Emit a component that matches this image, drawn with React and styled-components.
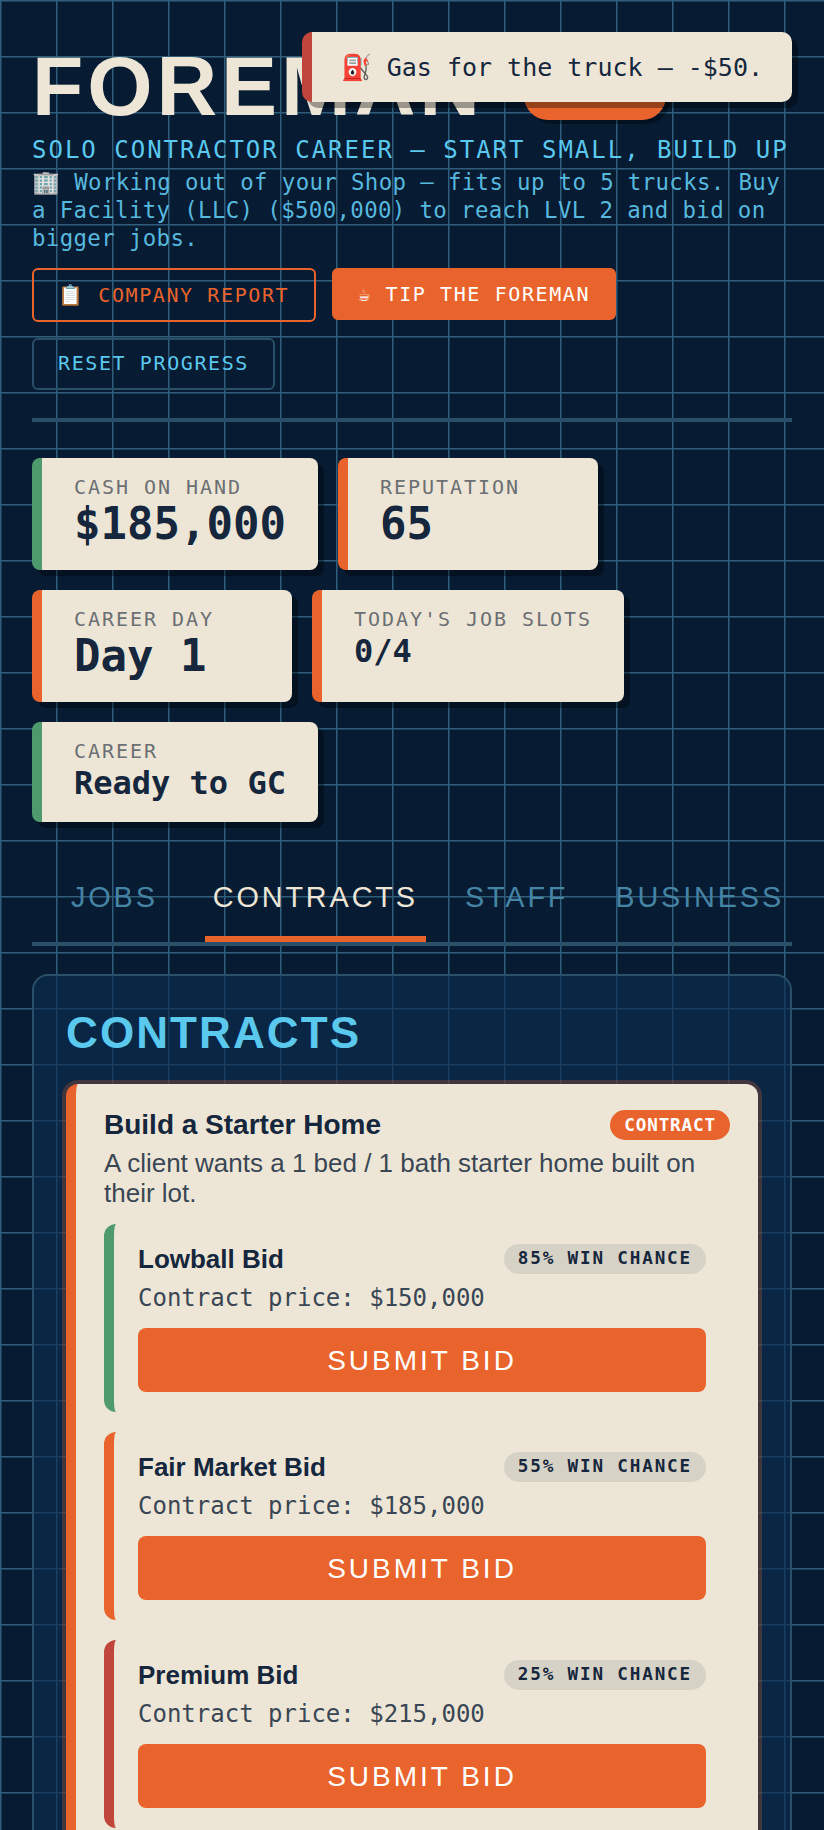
import React from "react";
import styled, { createGlobalStyle } from "styled-components";

const cream = "#ede6d6";
const navy = "#15263d";
const orange = "#e8642c";
const green = "#4f9a6c";
const red = "#c0463c";
const sky = "#5bc8ee";
const steel = "#2a4f68";
const mono = `"DejaVu Sans Mono", monospace`;
const sans = `"Liberation Sans", Arial, sans-serif`;

const GlobalStyle = createGlobalStyle`
  * { box-sizing: border-box; }
  html, body { margin: 0; padding: 0; }
  body {
    background-color: #071b32;
    background-image:
      linear-gradient(#2f5d7a 1px, transparent 2px),
      linear-gradient(90deg, #2f5d7a 1px, transparent 2px);
    background-size: 56px 56px;
    font-family: ${sans};
  }
`;

const Page = styled.div`
  height: 1830px;
  overflow: hidden;
  position: relative;
  padding: 42px 32px 0;
`;

const Toast = styled.div`
  position: absolute;
  top: 32px;
  right: 32px;
  z-index: 10;
  display: flex;
  align-items: center;
  height: 70px;
  padding: 0 29px;
  background: ${cream};
  border-left: 10px solid ${red};
  border-radius: 10px;
  box-shadow: 6px 6px 0 rgba(0, 0, 0, 0.35);
  color: ${navy};
  font-family: ${mono};
  font-size: 25px;
  white-space: pre;
`;

const Header = styled.header`
  display: flex;
  align-items: center;
  gap: 40px;
`;

const Title = styled.h1`
  margin: 0;
  color: ${cream};
  font-size: 84px;
  font-weight: 700;
  letter-spacing: 3.9px;
  line-height: 89px;
`;

const LevelBadge = styled.div`
  width: 142px;
  height: 66px;
  border-radius: 24px;
  background: ${orange};
  box-shadow: 4px 4px 0 rgba(0, 0, 0, 0.35);
`;

const Subtitle = styled.p`
  margin: 4px 0 0;
  color: ${sky};
  font-family: ${mono};
  font-size: 24px;
  letter-spacing: 2px;
  line-height: 30px;
  white-space: nowrap;
`;

const Notice = styled.p`
  margin: 3px 0 0;
  color: #57b8de;
  font-family: ${mono};
  font-size: 22.4px;
  letter-spacing: 0.36px;
  line-height: 28px;
`;

const Actions = styled.div`
  display: flex;
  flex-wrap: wrap;
  align-items: flex-start;
  gap: 16px;
  margin-top: 16px;
`;

const ActionButton = styled.button`
  padding: ${(p) => (p.$tall ? "13px 25px 13px 24px" : p.$raised ? "11px 24px 13px" : "12px 24px")};
  border: 2px solid ${(p) => p.$border};
  border-radius: 6px;
  background: ${(p) => p.$fill || "transparent"};
  color: ${(p) => p.$color};
  font-family: ${mono};
  font-size: 20px;
  letter-spacing: 0.08em;
  line-height: 24px;
`;

const Rule = styled.div`
  height: 4px;
  margin: 28px 0 36px;
  background: ${steel};
`;

const Stats = styled.div`
  display: flex;
  flex-wrap: wrap;
  gap: 20px;
`;

const StatCard = styled.div`
  min-width: 260px;
  padding: 17px 32px 19px;
  background: ${cream};
  border-left: 10px solid ${(p) => p.$accent};
  border-radius: 8px;
  box-shadow: 6px 6px 0 rgba(0, 0, 0, 0.35);
`;

const StatLabel = styled.div`
  color: #6c6f73;
  font-family: ${mono};
  font-size: 20px;
  letter-spacing: 1.96px;
  line-height: 25px;
`;

const StatValue = styled.div`
  margin-bottom: ${(p) => (p.$small ? "0" : "3px")};
  color: ${navy};
  font-family: ${mono};
  font-size: ${(p) => (p.$small ? "32px" : "44px")};
  font-weight: 700;
  line-height: ${(p) => (p.$small ? "39px" : "48px")};
`;

const Tabs = styled.nav`
  display: flex;
  justify-content: flex-end;
  gap: 31px;
  margin-top: 36px;
  border-bottom: 4px solid ${steel};
`;

const Tab = styled.div`
  padding: 23px 8px 22px;
  margin-left: ${(p) => (p.$active ? "8px" : "0")};
  border-bottom: 6px solid ${(p) => (p.$active ? orange : "transparent")};
  color: ${(p) => (p.$active ? cream : "#4584a4")};
  font-size: 28.8px;
  letter-spacing: 0.1em;
  line-height: 33px;
`;

const Panel = styled.section`
  margin-top: 28px;
  padding: 32px;
  border: 2px solid ${steel};
  border-radius: 16px;
  background: rgba(13, 44, 80, 0.65);
`;

const PanelTitle = styled.h2`
  margin: 0 0 26px;
  color: ${sky};
  font-size: 44px;
  font-weight: 700;
  letter-spacing: 2.1px;
  line-height: 50px;
`;

const JobCard = styled.article`
  padding: 25px 28px 24px;
  background: ${cream};
  border-left: 10px solid ${orange};
  border-radius: 12px;
  box-shadow: 0 0 0 4px rgba(232, 100, 44, 0.25);
`;

const SpacedRow = styled.div`
  display: flex;
  justify-content: space-between;
  align-items: center;
`;

const JobTitle = styled.h3`
  margin: 0;
  color: ${navy};
  font-size: 28px;
  font-weight: 700;
  line-height: 32px;
`;

const ContractTag = styled.span`
  padding: 5px 14px;
  border-radius: 999px;
  background: ${orange};
  color: #fff;
  font-family: ${mono};
  font-size: 17.6px;
  font-weight: 700;
  letter-spacing: 0.05em;
  line-height: 20px;
`;

const JobText = styled.p`
  margin: 7px 0 0;
  color: #3a4654;
  font-size: 26px;
  line-height: 30px;
`;

const Bid = styled.div`
  margin-top: ${(p) => (p.$first ? "16px" : "20px")};
  padding: 20px 24px;
  border-left: 10px solid ${(p) => p.$accent};
  border-radius: 12px;
`;

const BidName = styled.div`
  color: ${navy};
  font-size: 26px;
  font-weight: 700;
  line-height: 30px;
`;

const WinChance = styled.span`
  padding: 4px 14px 6px;
  border-radius: 999px;
  background: #d6d2c6;
  color: ${navy};
  font-family: ${mono};
  font-size: 17.6px;
  font-weight: 700;
  letter-spacing: 1.85px;
  line-height: 20px;
`;

const BidPrice = styled.div`
  margin-top: 9px;
  color: #3a4654;
  font-family: ${mono};
  font-size: 24px;
  line-height: 30px;
`;

const SubmitButton = styled.button`
  display: block;
  width: 100%;
  height: 64px;
  margin-top: 15px;
  padding: 2px 0 0;
  border: 0;
  border-radius: 8px;
  background: ${orange};
  color: #fff;
  font-family: ${sans};
  font-size: 28px;
  letter-spacing: 3px;
`;

const bids = [
  { name: "Lowball Bid", chance: "85%", price: "$150,000", accent: green },
  { name: "Fair Market Bid", chance: "55%", price: "$185,000", accent: orange },
  { name: "Premium Bid", chance: "25%", price: "$215,000", accent: red },
];

const App = () => {
  return (
    <Page>
      <GlobalStyle />
      <Toast>⛽ Gas for the truck — -$50.</Toast>
      <Header>
        <Title>FOREMAN</Title>
        <LevelBadge />
      </Header>
      <Subtitle>SOLO CONTRACTOR CAREER — START SMALL, BUILD UP</Subtitle>
      <Notice>
        🏢 Working out of your Shop — fits up to 5 trucks. Buy a Facility (LLC)
        ($500,000) to reach LVL 2 and bid on bigger jobs.
      </Notice>
      <Actions>
        <ActionButton $tall $border={orange} $color={orange}>
          📋 COMPANY REPORT
        </ActionButton>
        <ActionButton $border={orange} $fill={orange} $color="#fff">
          ☕ TIP THE FOREMAN
        </ActionButton>
        <ActionButton $raised $border={steel} $color={sky}>
          RESET PROGRESS
        </ActionButton>
      </Actions>
      <Rule />
      <Stats>
        <StatCard $accent={green}>
          <StatLabel>CASH ON HAND</StatLabel>
          <StatValue>$185,000</StatValue>
        </StatCard>
        <StatCard $accent={orange}>
          <StatLabel>REPUTATION</StatLabel>
          <StatValue>65</StatValue>
        </StatCard>
        <StatCard $accent={orange}>
          <StatLabel>CAREER DAY</StatLabel>
          <StatValue>Day 1</StatValue>
        </StatCard>
        <StatCard $accent={orange}>
          <StatLabel>TODAY'S JOB SLOTS</StatLabel>
          <StatValue $small>0/4</StatValue>
        </StatCard>
        <StatCard $accent={green}>
          <StatLabel>CAREER</StatLabel>
          <StatValue $small>Ready to GC</StatValue>
        </StatCard>
      </Stats>
      <Tabs>
        <Tab>JOBS</Tab>
        <Tab $active>CONTRACTS</Tab>
        <Tab>STAFF</Tab>
        <Tab>BUSINESS</Tab>
      </Tabs>
      <Panel>
        <PanelTitle>CONTRACTS</PanelTitle>
        <JobCard>
          <SpacedRow>
            <JobTitle>Build a Starter Home</JobTitle>
            <ContractTag>CONTRACT</ContractTag>
          </SpacedRow>
          <JobText>A client wants a 1 bed / 1 bath starter home built on their lot.</JobText>
          {bids.map((bid, i) => (
            <Bid key={bid.name} $accent={bid.accent} $first={i === 0}>
              <SpacedRow>
                <BidName>{bid.name}</BidName>
                <WinChance>{bid.chance} WIN CHANCE</WinChance>
              </SpacedRow>
              <BidPrice>Contract price: {bid.price}</BidPrice>
              <SubmitButton>SUBMIT BID</SubmitButton>
            </Bid>
          ))}
        </JobCard>
      </Panel>
    </Page>
  );
};

export default App;
